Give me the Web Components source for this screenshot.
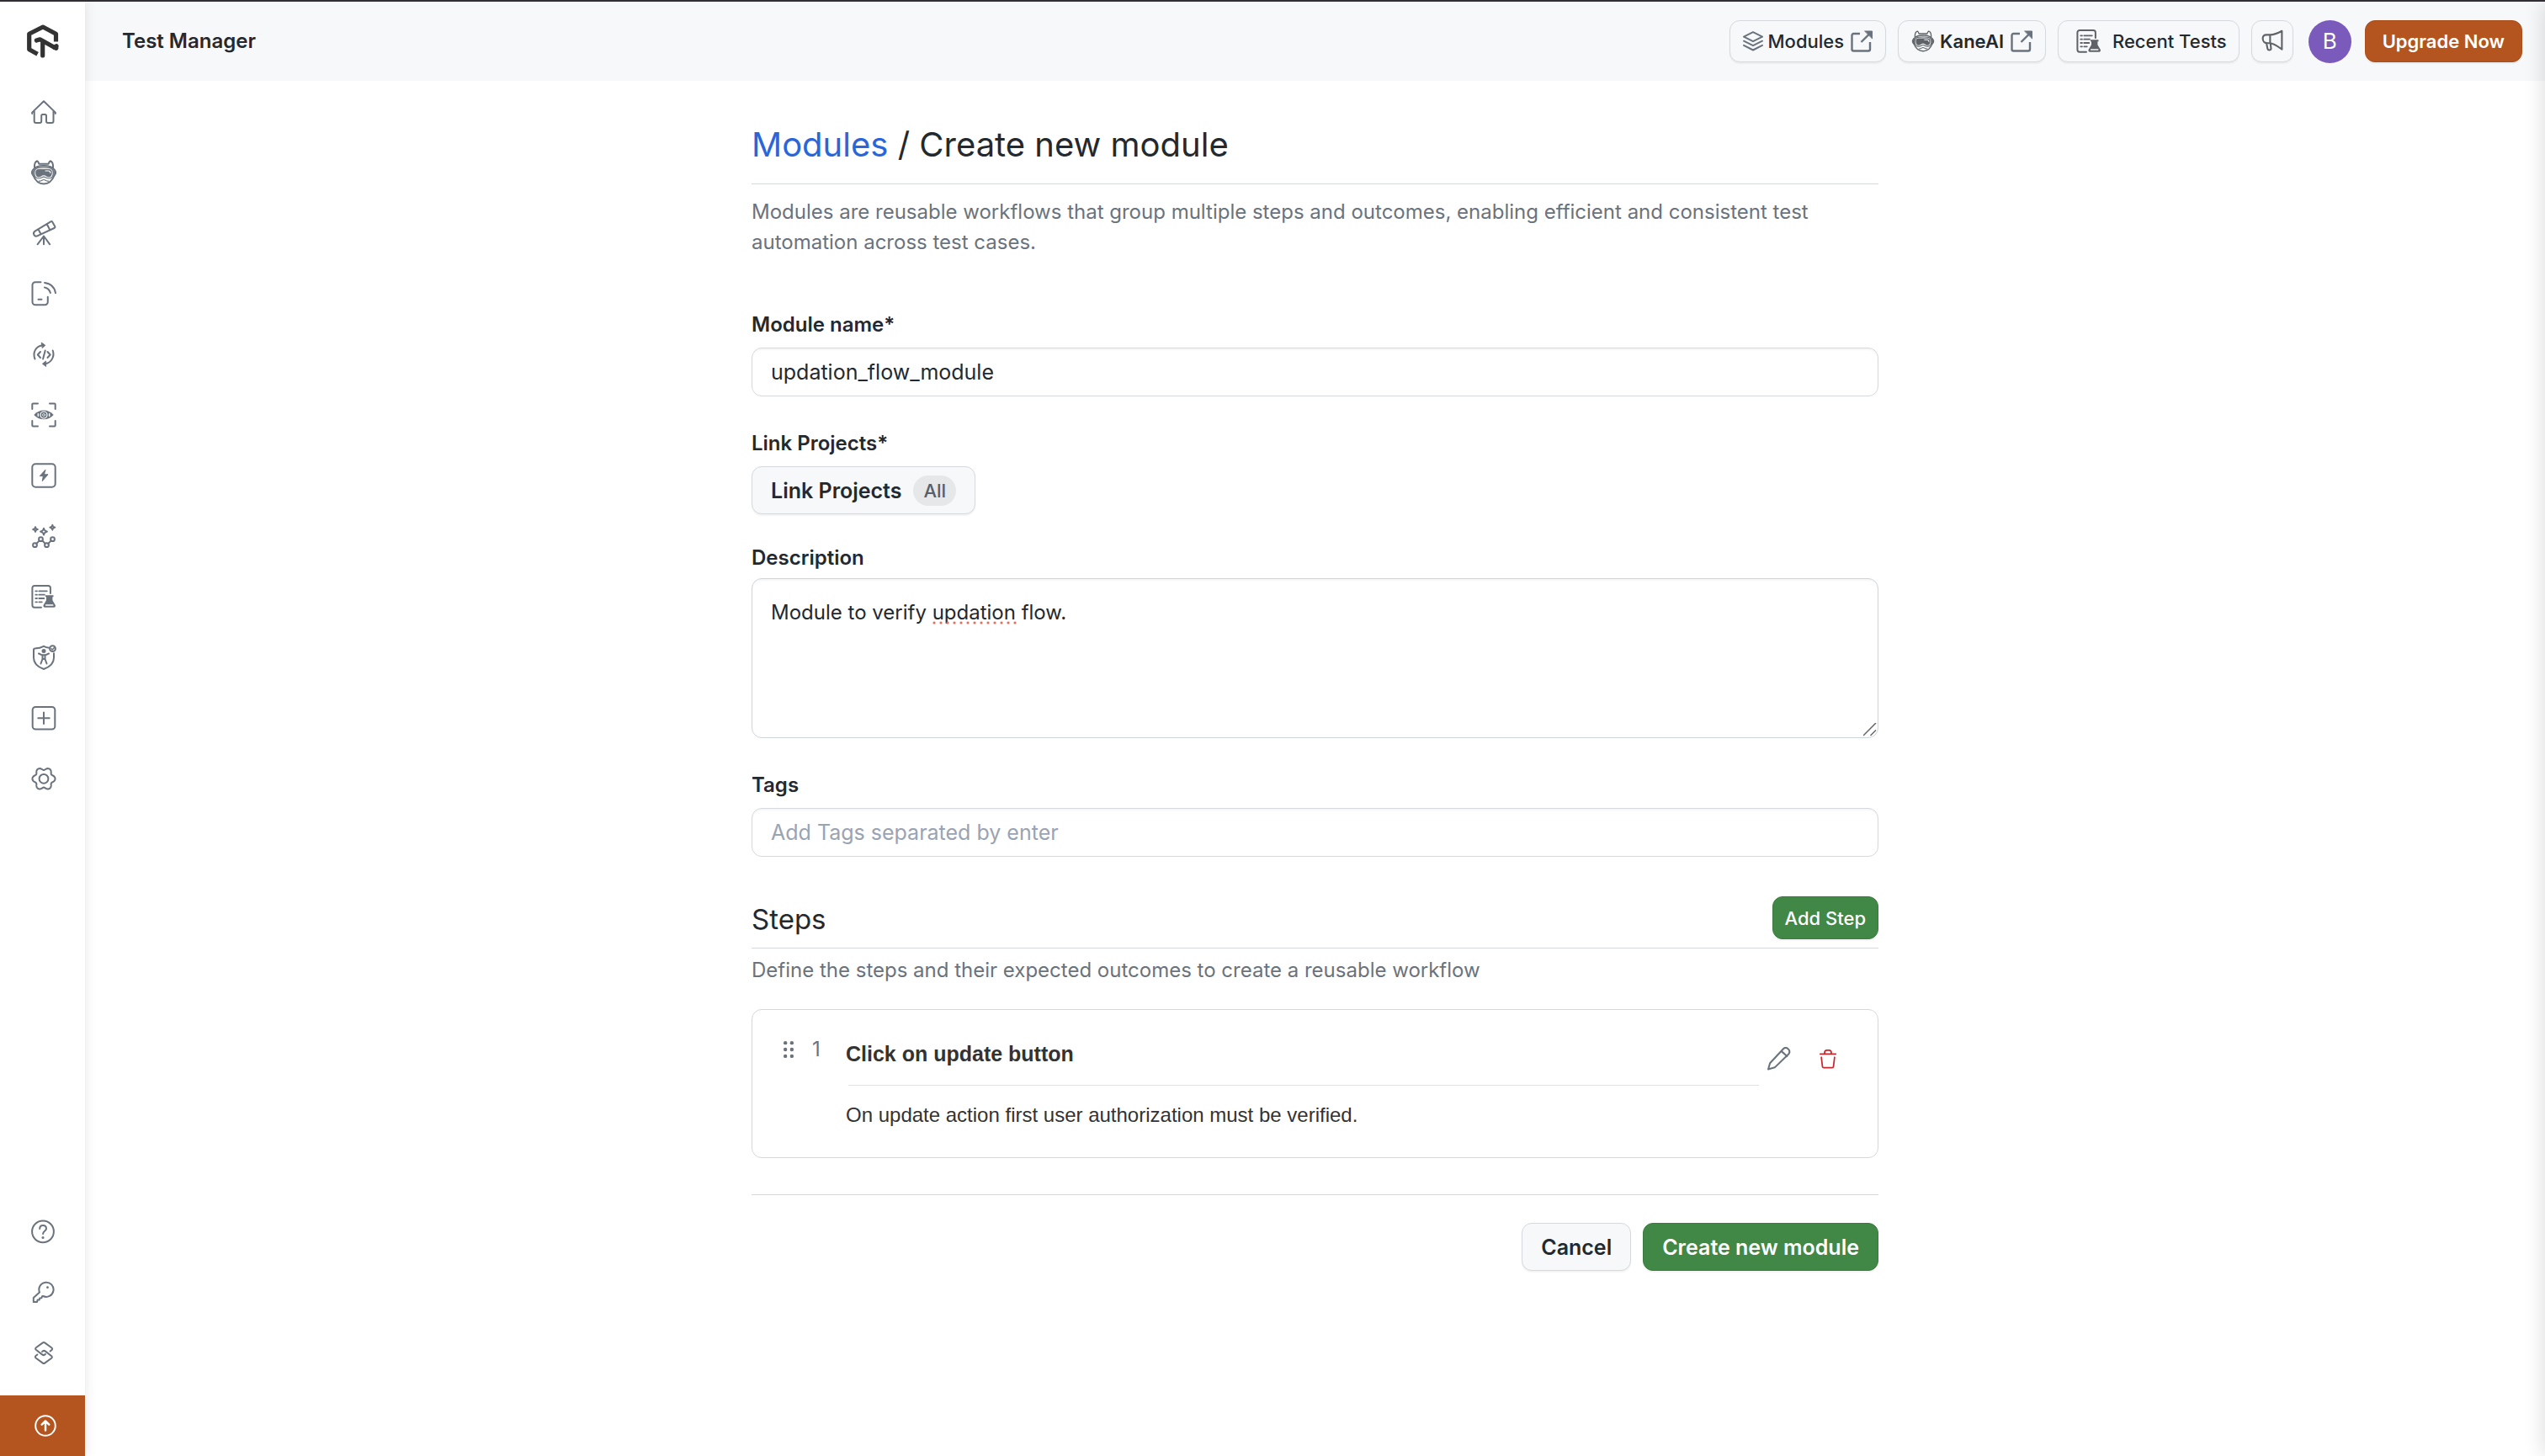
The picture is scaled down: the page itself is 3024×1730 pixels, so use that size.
<!DOCTYPE html>
<html lang="en">
<head>
<meta charset="utf-8">
<title>Test Manager</title>
<style>
:root{
  --ink:#24292f;--muted:#6a737d;--line:#d5d8dc;--soft:#f6f8fa;
  --green:#418745;--orange:#b4551f;
  font-family:Inter,"Liberation Sans",sans-serif;
}
html,body{height:100%}
body{margin:0;background:#fff;color:var(--ink);font-size:24px;line-height:36px}
</style>
</head>
<body>
<tm-app></tm-app>
<script>
const wave = (cx, cy, r, a) => {
  let d = '';
  for (let i = 0; i < 120; i++) {
    const t = i / 120 * Math.PI * 2, c = Math.cos(6 * t), q = r + a * (c > 0 ? Math.pow(c, .8) * .7 : -Math.pow(-c, 1.2));
    d += (i ? 'L' : 'M') + (cx + q * Math.cos(t)).toFixed(2) + ' ' + (cy + q * Math.sin(t)).toFixed(2);
  }
  return d + 'Z';
};
const star = (x, y, r) => `M${x} ${y - r}l${r * .3} ${r * .7} ${r * .7} ${r * .3} ${-r * .7} ${r * .3} ${-r * .3} ${r * .7} ${-r * .3} ${-r * .7} ${-r * .7} ${-r * .3} ${r * .7} ${-r * .3}z`;
const flask = `<path fill="currentColor" stroke="none" d="M18 14.3h9.5v1.9h-1.1v4l3.3 5.6c.7 1.4 0 2.9-1.6 2.9H17.3c-1.6 0-2.3-1.5-1.6-2.9l3.3-5.6v-4H18z"/><path stroke="var(--hole,#fff)" stroke-width="1.6" d="M18.6 26h8.2"/>`;
const doc = `<path d="M13 28.7H5a2.6 2.6 0 0 1-2.6-2.600V5.600A2.600 2.600 0 0 1 5 3h16.300a2.600 2.600 0 0 1 2.600 2.600V12"/><path stroke-width="1.8" d="M6.300 9.300h1.700M10.300 9.300h9.500M6.300 13.700h1.700M10.300 13.700h6.700M6.300 18h1.700M10.300 18h6M6.300 22.300h1.700M10.300 22.300h3.500"/>` + flask;
const kane = `<path d="M5 10C4.800 6 6 3 8.300 2.300 9.500 3 10 4.200 10.300 5.700h11.400C22 4.200 22.500 3 23.700 2.300 26 3 27.200 6 27 10"/>
<path d="M3.500 12.500C5.500 9.500 9 8 16 8s10.500 1.500 12.500 4.500M3.500 19.500C6 26 10.500 29.400 16 29.400S26 26 28.500 19.500"/>
<path fill="currentColor" stroke-width="1" d="M3.800 12.300C2 12.500 1.500 14 1.500 16s.5 3.500 2.300 3.700zM28.200 12.300c1.800.2 2.300 1.700 2.300 3.700s-.5 3.500-2.300 3.700z"/>
<path stroke-width="1.2" d="M16 10.200c-8 0-11.300.5-11.300 5.800 0 4.500 1.500 7 5 7 3.200 0 4.300-1.800 6.300-1.800s3.100 1.800 6.300 1.800c3.500 0 5-2.500 5-7 0-5.300-3.300-5.800-11.300-5.800z"/>
<path fill="currentColor" stroke="none" d="M10 12h12c2.600 0 3.800 1.200 3.800 3.700 0 3.400-1.200 5.800-3.800 5.800-2.400 0-3.400-2.300-6-2.300s-3.600 2.300-6 2.300c-2.600 0-3.800-2.400-3.800-5.800C6.200 13.200 7.400 12 10 12z"/>
<path stroke="var(--hole,#fff)" stroke-width="1.2" d="M18 14h3.500c1.700 0 2.300.7 2.300 2.300"/>
<path stroke-width="1.200" d="M10.500 26.200c3 .3 3.500-1.700 5.500-1.700s2.500 2 5.500 1.700"/>`;
const ICONS = {
  home:`<path d="M2.200 18v-1.400L16 3.200l13.800 13.400V18M4.700 15v12a2 2 0 0 0 2 2h4.500a2 2 0 0 0 2-2v-6.500a1.500 1.500 0 0 1 1.500-1.500h2.800a1.500 1.500 0 0 1 1.500 1.500V27a2 2 0 0 0 2 2h4.500a2 2 0 0 0 2-2V15"/>`,
  kane,
  scope:`<path d="M24.200 2.300 6 13.300c-2.200 1.400-2.400 3.200-1.600 4.700s2.400 2.200 4.400 1.200L28.500 10c.9-.5 1.200-1.100.7-2l-2.800-5.100c-.5-.9-1.300-1.100-2.200-.6zM19.700 5.200l3.500 6.800M9.500 11.500l3 5.500M16 19.500 8.600 29.300M16 21v8.300M16 19.500l7.200 9.800"/>`,
  device:`<path d="M12.500 2.200H6A3.500 3.500 0 0 0 2.500 5.700v20A3.500 3.500 0 0 0 6 29.200h11.300a3.500 3.500 0 0 0 3.500-3.500v-6M9.500 22.800h4M17 2.900c7 .8 12 5.500 13 12.300M17 8.500c3.600.7 6 3 6.900 6.600"/>`,
  code:`<path d="M5.500 21.500C2.800 15 5.500 6.500 14.500 5.200M26.700 11.500c2.400 6.500-1.200 14.500-9.200 15.800"/><path fill="currentColor" stroke-width="1" d="M13.500 2.300 17.700 5.200 14.600 8.300zM18.300 24.300 14.500 27.200l3.800 3z"/><path d="M12 13l-3.200 3.500L12 20M17.700 11.500l-2.600 10M20.500 13l3.200 3.500L20.500 20"/>`,
  eye:`<path d="M2.300 9V3.500a1 1 0 0 1 1-1H9M23 2.500h5.700a1 1 0 0 1 1 1V9M29.700 23v5.500a1 1 0 0 1-1 1H23M9 29.500H3.300a1 1 0 0 1-1-1V23"/><path fill="currentColor" stroke="none" d="M4.300 16C7.500 12.500 11.500 10.600 16 10.600S24.500 12.500 27.700 16C24.500 19.500 20.500 21.300 16 21.300S7.500 19.500 4.300 16z"/><circle cx="16" cy="16" r="4" stroke="var(--hole,#fff)" stroke-width="1.2"/><path stroke="var(--hole,#fff)" stroke-width="1.5" d="M9.300 14.800v2.400M22.700 14.800v2.400"/><circle cx="16" cy="16" r="1.5" stroke="var(--hole,#fff)" stroke-width=".7"/>`,
  bolt:`<rect x="2.300" y="2.300" width="27.400" height="27.400" rx="4"/><path fill="currentColor" stroke-width="1" d="M17.700 9.500 11.300 16.600h4l-1 6 6.700-7.800h-4.200z"/>`,
  spark:`<path stroke-width="1.8" d="${star(6,8,3)}${star(16,10.6,4)}${star(26.3,5.7,3)}"/><circle cx="5.500" cy="26.700" r="2.400"/><circle cx="12.500" cy="19.700" r="2.400"/><circle cx="19.500" cy="26.700" r="2.400"/><circle cx="26.500" cy="19.700" r="2.400"/><path d="m7.200 25 3.600-3.600M14.200 21.400l3.600 3.600M21.200 25l3.600-3.600"/>`,
  doc,
  shield:`<path d="M22.500 4.700C20 4.500 18 4 16 2.800 12.800 4.600 9 5.300 5.500 5.500c-1 0-1.500.7-1.500 1.600v9.400C4 23 9 27.500 16 30c7-2.500 12-7 12-13.500v-5.300"/><circle cx="26.500" cy="5.700" r="3.400"/><path stroke-width="1.5" d="m25 5.800 1.200 1.200L28.500 4.500"/><circle cx="16" cy="8.500" r="2.500" fill="currentColor" stroke="none"/><path d="M10 11.500l4 1.800h4l4-1.800M14.500 13.500v4.500L12.500 23.500M17.500 13.500v4.500l2 5.500M14.500 18h3"/>`,
  plus:`<rect x="2.700" y="2.900" width="26.600" height="26.600" rx="3.500"/><path d="M16 9.500v13.500M9.300 16.200h13.400"/>`,
  gear:`<path d="${wave(16,16.3,12.2,1.9)}"/><circle cx="16" cy="16.300" r="5.400"/>`,
  help:`<circle cx="16" cy="16.300" r="12.900"/><path d="M12.200 13c0-2.600 1.700-4 3.900-4s3.900 1.400 3.900 3.700c0 3-3.900 3.100-3.900 6.200"/><circle cx="16" cy="23.600" r="1.500" fill="currentColor" stroke="none"/>`,
  key:`<path d="M12 16.500A8.600 8.600 0 1 1 16.200 21l-1.200.2-.6 2-2.200.2-.3 2-2.300.2-.6 2.400H4.800V23z"/><circle cx="21.500" cy="10.700" r="1.400" fill="currentColor" stroke="none"/>`,
  link:`<path d="M24.600 14.500 26.500 12.900c.8-.7.8-1.700 0-2.400L18.500 4.600c-1-.8-2-.8-3 0l-7.700 5.700c-.9.700-.9 1.700 0 2.500l7.200 5.600c1.200.9 3 .7 4-.5"/><path d="M9.400 18.500 7.500 20.100c-.8.700-.8 1.700 0 2.400l8 5.900c1 .8 2 .8 3 0l7.700-5.700c.9-.7.9-1.700 0-2.500L19 14.600c-1.200-.9-3-.7-4 .5"/>`,
  up:`<circle cx="19" cy="16" r="11.800"/><path stroke-width="2.5" d="M19 21.500V11M14.700 14.700 19 10.500l4.300 4.200"/>`,
  layers:`<path d="M16 5.200 27 10.700 16 16.200 5 10.700zM5 15.700l11 5.500 11-5.500M5 20.900l11 5.600 11-5.600"/>`,
  ext:`<path stroke-linecap="butt" d="M14 6.500H6.500A2 2 0 0 0 4.500 8.500v16.500a2 2 0 0 0 2 2h17.500a2 2 0 0 0 2-2v-8.500M15.500 16.500 26 6"/><path fill="currentColor" stroke-width="1" d="M20 3.500h8.500V12z"/>`,
  horn:`<path d="M3 12c0-3.200 2-4.700 5-4.700h4.500C18 7.200 23 5.500 29 2v25C23 22.500 18 18.500 12.500 18.500H9C5.500 18.500 3 16 3 12zM13 7.500v11M8 18.500l1.500 7.500c.5 2.700 4.300 2.700 4.800.3L13.500 18.700"/>`,
  pencil:`<path d="M4 28.500 6 21.500 21.500 5c3-3 9 1.500 6 6L11.500 26.500zM19 7.700l6.500 6"/>`,
  trash:`<path d="M5.500 9.500h21M11.500 9V7.500A3 3 0 0 1 14.500 4.500h3a3 3 0 0 1 3 3V9M7 14l1.500 12.500a2 2 0 0 0 2 1.500h11a2 2 0 0 0 2-1.500L25 14"/>`,
  dots:`<g fill="currentColor" stroke="none"><circle cx="11.600" cy="7" r="2.500"/><circle cx="11.600" cy="16" r="2.500"/><circle cx="11.600" cy="25" r="2.500"/><circle cx="20.400" cy="7" r="2.500"/><circle cx="20.400" cy="16" r="2.500"/><circle cx="20.400" cy="25" r="2.500"/></g>`
};
const BOXES = { layers: '4 4 24 24', ext: '3 2.500 26 26', pencil: '3 3 27 27' };
const define = (name, html) => customElements.define(name, class extends HTMLElement {
  connectedCallback() {
    if (this.shadowRoot) return;
    this.attachShadow({ mode: 'open' }).innerHTML = typeof html === 'function' ? html(this) : html;
  }
});

define('tm-icon', el => `<style>:host{display:inline-flex;width:32px;height:32px;flex:none}svg{width:100%;height:100%}</style>
<svg viewBox="${BOXES[el.getAttribute('name')] || '0 0 32 32'}" fill="none" stroke="currentColor" stroke-width="${el.getAttribute('weight') || 2}" stroke-linecap="round" stroke-linejoin="round" aria-hidden="true">${ICONS[el.getAttribute('name')]}</svg>`);

define('tm-logo', `<style>:host{display:block;width:40px;height:42px}svg{display:block}</style>
<svg width="40" height="42" viewBox="0 0 40 42" fill="none" stroke="#333" stroke-width="5.200" stroke-linejoin="round" aria-hidden="true"><path d="M35.500 21.500V12.300L20 4 3.700 12.300v18.500L13.600 36.300"/><path stroke-linecap="round" d="M12.400 20 16.500 18.800 33.500 28.300 36 26.700M19.700 21v17"/><path stroke-linecap="round" d="M33.500 28.300l2.300 1"/></svg>`);

define('tm-nav-item', el => `<style>
:host{display:block}
a{display:flex;height:72px;align-items:center;justify-content:center;color:inherit;text-decoration:none}
</style><a href="#" aria-label="${el.getAttribute('label')}"><tm-icon name="${el.getAttribute('icon')}"></tm-icon></a>`);

define('tm-sidebar', `<style>
:host{display:flex;flex-direction:column;width:101px;flex:none;background:#fff;color:var(--muted);box-shadow:0 0 14px rgba(0,0,0,.1);z-index:1}
.logo{display:flex;height:93px;padding-bottom:2px;align-items:center;justify-content:center}
.top{padding-left:3px}
.bottom{margin-top:auto}
.up{margin-top:15px;background:var(--orange);color:#fff}
</style>
<div class="logo"><tm-logo></tm-logo></div>
<nav class="top">
<tm-nav-item icon="home" label="Home"></tm-nav-item>
<tm-nav-item icon="kane" label="KaneAI"></tm-nav-item>
<tm-nav-item icon="scope" label="Insights"></tm-nav-item>
<tm-nav-item icon="device" label="Real devices"></tm-nav-item>
<tm-nav-item icon="code" label="Automation"></tm-nav-item>
<tm-nav-item icon="eye" label="Visual testing"></tm-nav-item>
<tm-nav-item icon="bolt" label="HyperExecute"></tm-nav-item>
<tm-nav-item icon="spark" label="Analytics"></tm-nav-item>
<tm-nav-item icon="doc" label="Test manager"></tm-nav-item>
<tm-nav-item icon="shield" label="Accessibility"></tm-nav-item>
<tm-nav-item icon="plus" label="More"></tm-nav-item>
<tm-nav-item icon="gear" label="Settings"></tm-nav-item>
</nav>
<nav class="bottom">
<tm-nav-item icon="help" label="Help"></tm-nav-item>
<tm-nav-item icon="key" label="Access key"></tm-nav-item>
<tm-nav-item icon="link" label="Integrations"></tm-nav-item>
<tm-nav-item class="up" icon="up" label="Upgrade"></tm-nav-item>
</nav>`);

define('tm-button', `<style>
:host{display:block;flex:none}
button{display:flex;align-items:center;box-sizing:border-box;width:100%;margin:0;border:1px solid var(--line);border-radius:12px;background:var(--soft);color:var(--ink);font:600 25px/36px Inter,"Liberation Sans",sans-serif;height:57px;padding:0 22px;box-shadow:0 2px 1px rgba(30,35,40,.05);cursor:pointer;white-space:nowrap}
:host([tone=green]) button{background:var(--green);border-color:#3c7b40;color:#fff}
:host([tone=orange]) button{background:var(--orange);border-color:#a94e1b;color:#fff}
:host([size=small]) button{height:51px;font-size:22px;font-weight:500;padding:0 14px}
:host([size=bar]) button{height:50px;font-size:22px;font-weight:500;padding:0 15px}
:host([bold]) button{font-weight:600}
:host([tone=orange]) button{font-weight:600;padding:0 20px}
:host([wide]) button{padding:0 14px 0 20px}
:host([square]) button{padding:0;width:50px;justify-content:center}
</style><button type="button"><slot></slot></button>`);

define('tm-header', `<style>
:host{display:flex;align-items:center;gap:14px;height:94px;padding:0 27px 0 44px;background:var(--soft)}
.name{font-size:24px;font-weight:600;margin-right:auto}
tm-icon{color:var(--muted);--hole:#f6f8fa}
.lead{margin-right:6px;width:24px;height:24px}
.face{margin-right:6px;width:28px;height:28px}
.trail{margin-left:8px;width:26px;height:26px}
.dark{color:#5f6368}
.recent{margin-right:12px;width:32px;height:32px}
.horn{width:28px;height:28px}
.avatar{display:flex;align-items:center;justify-content:center;width:51px;height:51px;border:0;border-radius:50%;background:#7a5abb;color:#fff;font:400 26px/36px Inter,sans-serif;margin:0 2px 0 4px;padding:0}
</style>
<span class="name">Test Manager</span>
<tm-button size="bar"><tm-icon class="lead" name="layers"></tm-icon>Modules<tm-icon class="trail" name="ext" weight="2.4"></tm-icon></tm-button>
<tm-button size="bar" bold><tm-icon class="face dark" name="kane" weight="1.5"></tm-icon>KaneAI<tm-icon class="trail" name="ext" weight="2.4"></tm-icon></tm-button>
<tm-button size="bar" wide><tm-icon class="recent dark" name="doc"></tm-icon>Recent Tests</tm-button>
<tm-button size="bar" square aria-label="Announcements"><tm-icon class="horn dark" name="horn" weight="2.4"></tm-icon></tm-button>
<button class="avatar" type="button">B</button>
<tm-button size="bar" tone="orange">Upgrade Now</tm-button>`);

const fieldCss = `
:host{display:block}
label{display:block;font-weight:600;margin-bottom:9px}
input,textarea{display:block;box-sizing:border-box;width:100%;margin:0;border:1px solid var(--line);border-radius:12px;background:#fff;color:var(--ink);font:400 25px/36px Inter,"Liberation Sans",sans-serif;padding:10px 22px;box-shadow:inset 0 2px 2px rgba(30,35,40,.04);outline:0}
input{height:58px}
input::placeholder{color:#9aa3b2;opacity:1}`;

define('tm-text-field', el => `<style>${fieldCss}</style>
<label for="f">${el.getAttribute('label')}</label>
<input id="f" type="text" value="${el.getAttribute('value') || ''}" placeholder="${el.getAttribute('placeholder') || ''}">`);

define('tm-text-area', el => `<style>${fieldCss}
label{margin-bottom:6px}
.box{position:relative}
textarea{height:190px;padding:22px;font-size:24px;resize:none;border-color:#ced5dd}
.typo{position:absolute;left:215px;top:51px;width:100px;height:4px;pointer-events:none;background:radial-gradient(circle at 2px 2px,#f0695c 0 1px,#f0695c00 2px) 0 0/8px 4px}
svg{position:absolute;right:2px;bottom:2px;pointer-events:none}
</style>
<label for="f">${el.getAttribute('label')}</label>
<div class="box"><textarea id="f" spellcheck="false">${el.getAttribute('value')}</textarea><span class="typo"></span>
<svg width="16" height="16" viewBox="0 0 16 16" stroke="#666" stroke-width="1.5" aria-hidden="true"><path d="M0 15 15 0M8.500 15 15 8.500"/></svg></div>`);

define('tm-link-projects', `<style>
:host{display:block}
.label{font-weight:600;margin-bottom:9px}
.row{display:flex}
.pill{margin-left:14px;border-radius:18px;background:#e5e7e9;color:#57606a;font-size:22px;font-weight:500;padding:0 12px}
</style><div class="label" id="l">Link Projects*</div>
<div class="row"><tm-button aria-labelledby="l">Link Projects<span class="pill">All</span></tm-button></div>`);

define('tm-step', el => `<style>
:host{display:flex;box-sizing:border-box;border:1px solid #d3d7df;border-radius:12px;padding:29px 45px 32px 29px;color:#333;font-family:"Liberation Sans",Arial,sans-serif}
.grip{width:28px;height:28px;margin:4px 14px 0 0;color:var(--muted)}
.num{width:40px;font-family:Inter,sans-serif;color:var(--muted)}
.body{flex:1;padding-top:5px}
h3{margin:0;font-size:25px;font-weight:700;line-height:36px}
hr{border:0;border-top:1px solid #dfe1e4;margin:19px 0 17px 3px}
p{margin:0;font-size:24px}
.acts{display:flex;gap:30px;margin:15px 0 0 10px}
button{display:flex;width:28px;height:28px;padding:0;border:0;background:none;color:var(--muted);cursor:pointer}
.del{color:#c8282d}
button tm-icon{width:28px;height:28px}
</style>
<tm-icon class="grip" name="dots"></tm-icon><span class="num">${el.getAttribute('number')}</span>
<div class="body"><h3>${el.getAttribute('heading')}</h3><hr><p><slot></slot></p></div>
<div class="acts"><button type="button" aria-label="Edit step"><tm-icon name="pencil"></tm-icon></button><button type="button" class="del" aria-label="Delete step"><tm-icon name="trash"></tm-icon></button></div>`);

define('tm-module-form', `<style>
:host{display:block;max-width:1339px;margin:0 auto;padding-top:52px}
h1,h2,p{margin:0;font-weight:400}
h1{font-size:40px;line-height:48px;padding-bottom:22px;border-bottom:1px solid var(--line)}
h1 a{color:#2a66d9;text-decoration:none}
p{color:var(--muted)}
.intro{margin:15px 0 62px}
.fields{display:flex;flex-direction:column;gap:38px}
tm-text-area{margin-top:-4px}
.head{display:flex;justify-content:space-between;align-items:flex-end;margin-top:47px;padding-bottom:10px;border-bottom:1px solid var(--line)}
h2{font-size:33px;line-height:48px}
.hint{margin:8px 0 28px}
.actions{display:flex;justify-content:flex-end;gap:14px;margin-top:43px;padding-top:33px;border-top:1px solid var(--line)}
</style>
<h1><a href="#">Modules</a> / Create new module</h1>
<p class="intro">Modules are reusable workflows that group multiple steps and outcomes, enabling efficient and consistent test automation across test cases.</p>
<div class="fields">
<tm-text-field label="Module name*" value="updation_flow_module"></tm-text-field>
<tm-link-projects></tm-link-projects>
<tm-text-area label="Description" value="Module to verify updation flow."></tm-text-area>
<tm-text-field label="Tags" placeholder="Add Tags separated by enter"></tm-text-field>
</div>
<div class="head"><h2>Steps</h2><tm-button size="small" tone="green">Add Step</tm-button></div>
<p class="hint">Define the steps and their expected outcomes to create a reusable workflow</p>
<tm-step number="1" heading="Click on update button">On update action first user authorization must be verified.</tm-step>
<div class="actions"><tm-button>Cancel</tm-button><tm-button tone="green">Create new module</tm-button></div>`);

define('tm-app', `<style>
:host{display:flex;box-sizing:border-box;min-height:100%;border-top:2px solid #302e33;position:relative;overflow:hidden}
.page{flex:1;min-width:0}
.edge{position:absolute;top:0;bottom:0;left:100%;width:20px;box-shadow:0 0 26px rgba(0,0,0,.16)}
</style>
<tm-sidebar></tm-sidebar>
<div class="page"><tm-header></tm-header><main><tm-module-form></tm-module-form></main></div>
<div class="edge"></div>`);
</script>
</body>
</html>
